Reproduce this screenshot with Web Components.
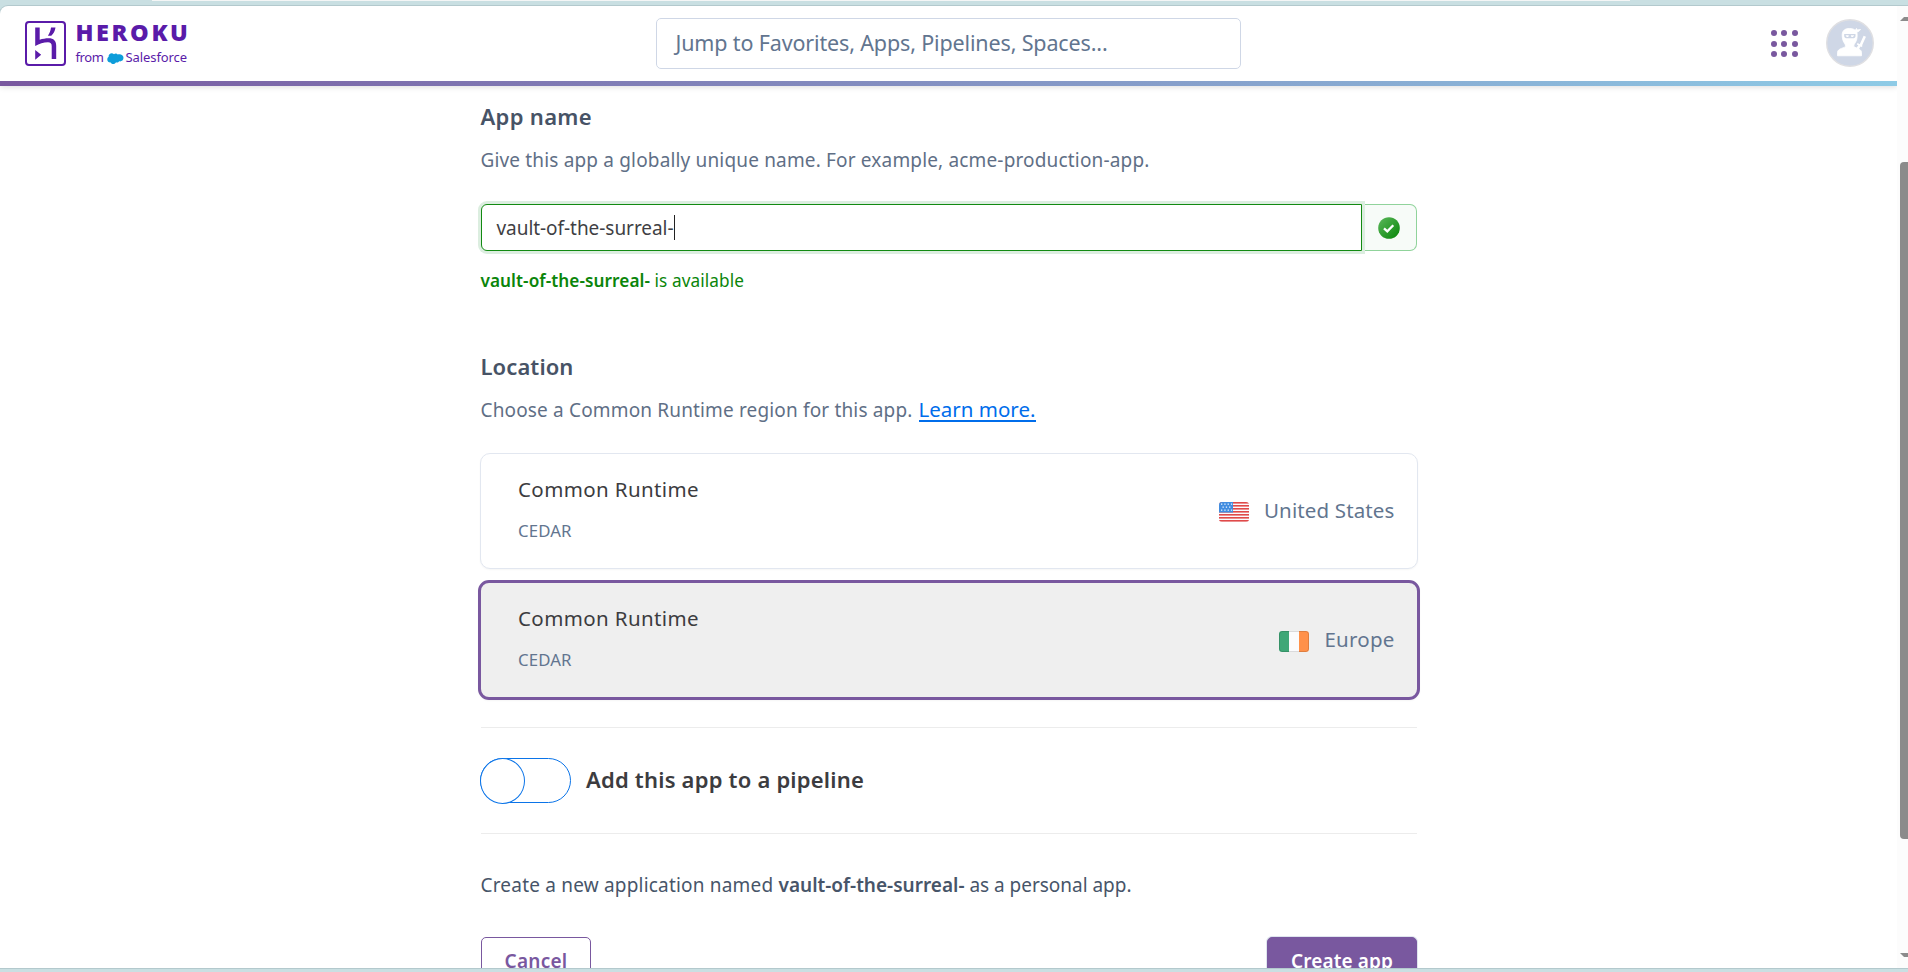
<!DOCTYPE html>
<html lang="en"><head><meta charset="utf-8"><title>Create New App | Heroku</title>
<style>
html,body{margin:0;height:100%;overflow:hidden;background:#c9dfe2}
body{font-family:"Noto Sans",Lato,sans-serif;color:#475569}
</style></head><body>
<app-window>
  <top-bar slot="header"></top-bar>
  <new-app-form></new-app-form>
</app-window>
<script>
const define=(name,html,setup)=>{
  const t=document.createElement('template');t.innerHTML=html;
  customElements.define(name,class extends HTMLElement{
    connectedCallback(){
      if(this.shadowRoot)return;
      this.attachShadow({mode:'open'}).append(t.content.cloneNode(true));
      if(setup)setup(this,this.shadowRoot);
    }
  });
};

/* One line of text, tracked to fill the given width. */
define('fit-text',`<style>
:host{display:inline-block;white-space:pre;line-height:30px;height:30px;vertical-align:top;overflow:visible}
span{display:inline-block}
</style><span><slot></slot></span>`,(el,root)=>{
  const w=+el.getAttribute('width'),s=+el.getAttribute('size'),n=el.textContent.length;
  el.style.fontSize=s+'px';
  const span=root.querySelector('span');
  const natural=span.getBoundingClientRect().width;
  el.style.width=w+'px';
  span.style.letterSpacing=((w-natural)/n)+'px';
});

define('heroku-logo',`<style>
:host{display:flex;gap:9.5px;align-items:flex-start}
svg{display:block}
.words{display:flex;flex-direction:column;color:#5a1ba9;padding-top:1px}
.name{font-family:"Open Sans";font-weight:800;height:25px}
.name fit-text{line-height:20px;height:20px}
.by{display:flex;height:20px}
.by fit-text{line-height:20px;height:20px}
.by svg{margin:6px 2px 0 3px}
</style>
<svg width="41" height="45" viewBox="0 0 41 45"><rect x="1" y="1" width="39" height="43" rx="3" fill="none" stroke="#5a1ba9" stroke-width="2"/>
<path d="M10.2 6.5h4.5v12.2c2.7-1 6-1.500 9-1.500 5 0 7.500 2.600 7.500 7.500V38h-4.500V25c0-2.600-1.300-3.700-3.700-3.700-4.500 0-8.700 1.600-12.800 3.700ZM26 6.500h4.500c-.5 3.500-2 6.200-4.200 8.200h-3.400c1.800-2.500 2.700-5.200 3.100-8.200ZM10.200 29l6 4.700-6 5Z" fill="#5a1ba9"/></svg>
<div class="words"><div class="name"><fit-text size="23.500" width="115">HEROKU</fit-text></div>
<div class="by"><fit-text size="13" width="28">from</fit-text>
<svg width="17" height="12" viewBox="0 0 17 12"><path d="M7 1.300C8 .1 10 .2 10.700 1.600c2-1.100 5.800-.2 5.800 3.200 0 2.600-2.200 4-4.300 3.500-.8 1.400-2.300 1.500-3.200 1-1 2.400-4.300 2.400-5.200.1C1.800 9.700.2 8.300.3 6.300c0-1.100.6-2 1.400-2.500C1 1.200 4.600-1.300 7 1.300Z" fill="#0d9dda"/></svg>
<fit-text size="13" width="61.500">Salesforce</fit-text></div></div>`);

define('search-box',`<style>
:host{display:block;box-sizing:border-box;width:585px;height:51px;border:1px solid #cfd7e6;border-radius:5px;background:#fff;padding:9px 18.500px;color:#62758f}
</style><fit-text size="21.500" width="432">Jump to Favorites, Apps, Pipelines, Spaces...</fit-text>`);

define('app-switcher',`<style>:host{display:grid;grid-template-columns:repeat(3,6px);gap:4.500px;}
i{width:6px;height:6px;border-radius:50%;background:#79589f}</style>${'<i></i>'.repeat(9)}`);

define('user-avatar',`<style>:host{display:block}svg{display:block}</style>
<svg width="48" height="48" viewBox="0 0 48 48"><circle cx="24" cy="24" r="23.300" fill="#cfd7e6" stroke="#dfdfe2" stroke-width="1.400"/>
<path d="M16.200 16c0-4.600 3-6.500 7.300-6.500 2.600 0 4.400.6 5.700 1.800l1.300-1.900.7 1.500 3.300-.4-1.600 1.800-2 .6c.6 3.400.3 7.600-1.300 10.300-1 1.500-1.800 2.300-1.800 4 0 1.800 7.700 1.800 7.700 6.300v3.300H11.500v-3.300c0-4.500 8-4.400 8-6.300 0-1.700-.8-2.500-1.700-4-1.200-2-1.600-4.500-1.600-7.200Z" fill="#fff" stroke="#fff" stroke-width=".8" stroke-linejoin="round"/>
<path d="M18.200 15h11.300v2c0 1.600-1.100 2.300-2.700 2.300h-5.600c-1.800 0-3-.8-3-2.300Z" fill="#cfd7e6"/><path d="M19.500 16.200h3.300l-.5 1.700h-1.600Zm5.300 0h3.400l-1.200 1.700h-1.600Z" fill="#fff"/>
<path d="m38.800 17.300-4.300 9.400M34 26l-3 4.500" stroke="#fff" stroke-width="2.600"/><path d="m31.200 24.800 5 2.600" stroke="#fff" stroke-width="1.600"/></svg>`);

define('top-bar',`<style>
:host{display:block;height:80px;box-shadow:0 1px 6px #0002}
.row{box-sizing:border-box;height:75px;display:grid;grid-template-columns:631px 585px 1fr;padding:12px 23.500px 0 25px;align-items:start}
heroku-logo{margin-top:3px}
.tools{display:flex;justify-content:flex-end;align-items:flex-start;gap:28px}
app-switcher{margin-top:12px}
user-avatar{margin-top:1px}
.bar{height:5px;background:linear-gradient(90deg,#79589f,#8ecbe6)}
</style><div class="row"><heroku-logo></heroku-logo><search-box></search-box><div class="tools"><app-switcher></app-switcher><user-avatar></user-avatar></div></div><div class="bar"></div>`);

define('name-field',`<style>
:host{display:flex;height:47px}
.in{box-sizing:border-box;width:881px;border:1px solid #128a12;border-radius:6px 0 0 6px;box-shadow:0 0 0 3px #dceee0;background:#fff;padding:8px 0 0 14.500px;display:flex;z-index:1;color:#3f3f44}
.caret{width:1px;height:25px;background:#222;margin-top:2px}
.ok{box-sizing:border-box;flex:1;border:1px solid #90d39b;border-left:0;border-radius:0 7px 7px 0;background:#f7fbf8;display:grid;place-items:center}
svg{display:block}
</style><div class="in"><fit-text size="19" width="177">vault-of-the-surreal-</fit-text><span class="caret"></span></div>
<div class="ok"><svg width="22" height="22" viewBox="0 0 22 22"><defs><linearGradient id="g" x1="0" y1="0" x2="1" y2="1"><stop stop-color="#5cb85c"/><stop offset="1" stop-color="#078507"/></linearGradient></defs><circle cx="11" cy="11" r="10.800" fill="url(#g)"/><path d="m6 11.300 3.300 3 6-6" fill="none" stroke="#fff" stroke-width="2.300"/></svg></div>`);

define('region-flag',`<style>:host{display:block}svg{display:block}</style>`,(el,root)=>{
  const us=el.getAttribute('country')==='us';
  let s='';
  if(us){
    for(let i=0;i<7;i++)s+=`<rect y="${i*3}" width="30" height="1.600" fill="#e04a4a"/>`;
    s+='<rect width="14" height="10.500" fill="#428de0"/>';
    for(let r=0;r<3;r++)for(let c=0;c<(r===1?3:4);c++)s+=`<rect x="${2+c*3.300+(r===1?1.500:0)}" y="${1.500+r*3}" width="1.300" height="1.300" fill="#e5f1ff"/>`;
  }else s='<rect width="10" height="21" fill="#3fa777"/><rect x="20" width="10" height="21" fill="#ff914a"/><rect x=".5" y=".5" width="29" height="20" rx="2.500" fill="none" stroke="#000" stroke-opacity=".13"/>';
  const h=us?20:21;
  root.innerHTML+=`<svg width="30" height="${h}" viewBox="0 0 30 ${h}"><defs><clipPath id="c"><rect width="30" height="${h}" rx="3"/></clipPath></defs><g clip-path="url(#c)"><rect width="30" height="${h}" fill="#fbfbfd"/>${s}</g></svg>`;
});

define('region-card',`<style>
:host{box-sizing:border-box;display:flex;justify-content:space-between;margin:0 -1px;width:938px;height:116px;border:1px solid #e2e7f0;border-radius:10px;background:#fff;padding:20px 22.500px 0 37px;box-shadow:0 1px 2px #0000000a}
:host([selected]){margin:0 -3px;width:942px;height:120px;border:3px solid #79589f;border-radius:11px;background:#efefef;padding:20px 22.500px 0 37px}
.l{display:flex;flex-direction:column;gap:12px;color:#3c3c40}
.l fit-text+fit-text{color:#62758f}
.r{display:flex;gap:15.500px;padding-top:21px;color:#62758f;height:30px}
::slotted(region-flag){margin-top:7px}
</style><div class="l"><fit-text size="20.500" width="181">Common Runtime</fit-text><fit-text size="16.800" width="53.500">CEDAR</fit-text></div>
<div class="r"><slot></slot></div>`);

define('toggle-switch',`<style>:host{display:block;box-sizing:border-box;width:91px;height:45px;border:1px solid #0b74e8;border-radius:23px;margin-left:-1px}
i{display:block;box-sizing:border-box;width:45px;height:46px;border:1px solid #0b74e8;border-radius:50%;margin:-1px;background:#fff}</style><i></i>`);

define('action-button',`<style>
:host{box-sizing:border-box;display:block;height:47px;border:1px solid #79589f;border-radius:5px;padding:8px 22.500px;color:#79589f;font-weight:650}
:host([primary]){background:#79589f;color:#fff;padding:8px 23px;box-shadow:0 0 0 1px #dfe5ee}
</style><slot></slot>`);

define('new-app-form',`<style>
:host{display:flex;flex-direction:column;width:936px;margin-left:481px;padding-top:15px}
p,h2{margin:0;height:30px;font-size:20px;font-weight:400;display:flex;position:relative;left:-.5px}
.h{font-weight:600;color:#475366}
.p{color:#5f6f86}
.p,name-field,.avail{flex:none}
h2+.p{margin-top:14px}
name-field{margin-top:29px}
.avail{margin-top:15px;color:#0a850a}
.loc{margin-top:55px}
region-card,action-button{flex:none}
.c1{margin-top:28px}.c2{margin-top:11px}
b{font-weight:650}
hr{width:100%;height:1px;border:0;margin:0;background:#ececec;flex:none}
.s1{margin-top:27px}.s2{margin-top:29px}
.pipe{display:flex;height:46px;margin-top:30px;gap:15px;flex:none;font-weight:600;color:#3c3c40}
.pipe fit-text{margin-top:6px}
.sum{margin-top:36px}
.act{display:flex;justify-content:space-between;margin-top:37px}
a{color:#006deb;margin:-1px 0 0 6px;display:block;box-sizing:border-box;border-bottom:2px solid #006deb;height:28px}
</style>
<h2 class="h"><fit-text size="22" width="111.500">App name</fit-text></h2>
<p class="p"><fit-text size="19" width="669">Give this app a globally unique name. For example, acme-production-app.</fit-text></p>
<name-field></name-field>
<p class="avail"><b><fit-text size="17.200" width="169.500">vault-of-the-surreal-</fit-text></b><fit-text size="17.200" width="94"> is available</fit-text></p>
<h2 class="h loc"><fit-text size="22" width="93">Location</fit-text></h2>
<p class="p"><fit-text size="19" width="432">Choose a Common Runtime region for this app.</fit-text><a><fit-text size="20.500" width="117">Learn more.</fit-text></a></p>
<region-card class="c1"><region-flag country="us"></region-flag><fit-text size="20.500" width="130.500">United States</fit-text></region-card>
<region-card class="c2" selected><region-flag country="ie"></region-flag><fit-text size="20.500" width="70">Europe</fit-text></region-card>
<hr class="s1">
<div class="pipe"><toggle-switch></toggle-switch><fit-text size="22" width="278">Add this app to a pipeline</fit-text></div>
<hr class="s2">
<p class="sum"><fit-text size="19" width="298">Create a new application named </fit-text><b><fit-text size="19" width="186">vault-of-the-surreal-</fit-text></b><fit-text size="19" width="167"> as a personal app.</fit-text></p>
<div class="act"><action-button><fit-text size="19" width="63">Cancel</fit-text></action-button><action-button primary><fit-text size="19" width="102">Create app</fit-text></action-button></div>`);

define('scroll-bar',`<style>
:host{display:flex;flex-direction:column;width:11px;background:#fcfcfc;align-items:flex-end;overflow:hidden;box-sizing:border-box;padding-top:11px}
svg{display:block}
.thumb{width:8px;height:677px;margin-top:141px;background:#8b8b8b;border-radius:4px 0 0 4px}
svg+.thumb+svg{margin-top:114px}
</style><svg width="8" height="4"><path d="M0 4 4 0h4v4Z" fill="#8b8b8b"/></svg><div class="thumb"></div><svg width="8" height="4"><path d="M0 0h8v4H4Z" fill="#8b8b8b"/></svg>`);

define('app-window',`<style>
:host{display:flex;flex-direction:column;height:972px;background:#c9dfe2}
.tab{height:1px;margin:0 278px 5px 152px;background:#f4f6f6;flex:none}
.win{display:flex;height:962px;background:#fff;border-radius:8px 0 0 0;box-shadow:0 0 0 1px #b3c9cd;overflow:hidden;flex:none}
.page{flex:1;overflow:hidden}
</style><div class="tab"></div><div class="win"><div class="page"><slot name="header"></slot><slot></slot></div><scroll-bar></scroll-bar></div>`);
</script>
</body></html>
